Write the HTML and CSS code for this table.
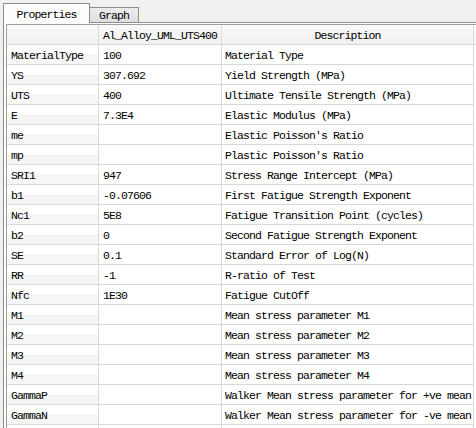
FILE: index.html
```html
<!DOCTYPE html>
<html>
<head>
<meta charset="utf-8">
<link rel="stylesheet" href="styles.css">
</head>
<body>
<div class="tabbar">
  <div class="tab active">Properties</div>
  <div class="tab">Graph</div>
</div>
<div class="panel">
  <div class="grid">
    <div class="hd"></div><div class="hd">Al_Alloy_UML_UTS400</div><div class="hd center">Description</div><div class="hd fill"></div>

    <div class="key">MaterialType</div><div class="c">100</div><div class="c d">Material Type</div><div class="fill"></div>
    <div class="key">YS</div><div class="c">307.692</div><div class="c d">Yield Strength (MPa)</div><div class="fill"></div>
    <div class="key">UTS</div><div class="c">400</div><div class="c d">Ultimate Tensile Strength (MPa)</div><div class="fill"></div>
    <div class="key">E</div><div class="c">7.3E4</div><div class="c d">Elastic Modulus (MPa)</div><div class="fill"></div>
    <div class="key">me</div><div class="c"></div><div class="c d">Elastic Poisson's Ratio</div><div class="fill"></div>
    <div class="key">mp</div><div class="c"></div><div class="c d">Plastic Poisson's Ratio</div><div class="fill"></div>
    <div class="key">SRI1</div><div class="c">947</div><div class="c d">Stress Range Intercept (MPa)</div><div class="fill"></div>
    <div class="key">b1</div><div class="c">-0.07606</div><div class="c d">First Fatigue Strength Exponent</div><div class="fill"></div>
    <div class="key">Nc1</div><div class="c">5E8</div><div class="c d">Fatigue Transition Point (cycles)</div><div class="fill"></div>
    <div class="key">b2</div><div class="c">0</div><div class="c d">Second Fatigue Strength Exponent</div><div class="fill"></div>
    <div class="key">SE</div><div class="c">0.1</div><div class="c d">Standard Error of Log(N)</div><div class="fill"></div>
    <div class="key">RR</div><div class="c">-1</div><div class="c d">R-ratio of Test</div><div class="fill"></div>
    <div class="key">Nfc</div><div class="c">1E30</div><div class="c d">Fatigue CutOff</div><div class="fill"></div>
    <div class="key">M1</div><div class="c"></div><div class="c d">Mean stress parameter M1</div><div class="fill"></div>
    <div class="key">M2</div><div class="c"></div><div class="c d">Mean stress parameter M2</div><div class="fill"></div>
    <div class="key">M3</div><div class="c"></div><div class="c d">Mean stress parameter M3</div><div class="fill"></div>
    <div class="key">M4</div><div class="c"></div><div class="c d">Mean stress parameter M4</div><div class="fill"></div>
    <div class="key">GammaP</div><div class="c"></div><div class="c d">Walker Mean stress parameter for +ve mean</div><div class="fill"></div>
    <div class="key">GammaN</div><div class="c"></div><div class="c d">Walker Mean stress parameter for -ve mean</div><div class="fill"></div>
    <div class="key"></div><div class="c"></div><div class="c d"></div><div class="fill"></div>
  </div>
</div>
</body>
</html>
```
FILE: styles.css
```css
html, body {
  margin: 0;
  padding: 0;
  background: #f0f0f0;
  overflow: hidden;
}
body {
  width: 476px;
  height: 428px;
  font-family: "Liberation Mono", "DejaVu Sans Mono", monospace;
  font-size: 11.5px;
  letter-spacing: -0.9px;
  color: #000;
}
.tabbar {
  display: flex;
  align-items: flex-end;
  height: 22px;
  padding-left: 3px;
}
.tab {
  box-sizing: border-box;
  text-align: center;
  white-space: nowrap;
}
.tab.active {
  position: relative;
  z-index: 1;
  width: 87px;
  height: 20px;
  margin-bottom: -1px;
  border: 1px solid #8c8c8c;
  border-bottom: none;
  background: #fcfcfc;
  padding-top: 3px;
  line-height: 16px;
}
.tab:not(.active) {
  width: 49px;
  height: 15px;
  border-top: 1px solid #8c8c8c;
  border-right: 1px solid #8c8c8c;
  background: linear-gradient(#ececec, #dedede);
  padding-top: 1px;
  line-height: 14px;
}
.panel {
  margin-left: 3px;
  border-left: 1px solid #8c8c8c;
  border-top: 1px solid #8c8c8c;
  padding: 1px 0 0 2px;
  background: #fcfcfc;
  height: 420px;
}
.grid {
  display: grid;
  grid-template-columns: 92px 123px 252px 1fr;
  grid-auto-rows: 20px;
  border-left: 1px solid #a0a0a0;
  border-top: 1px solid #a0a0a0;
  background: #fff;
}
.grid > div {
  box-sizing: border-box;
  border-right: 1px solid #d8d8d8;
  border-bottom: 1px solid #d8d8d8;
  padding: 3px 0 0 4px;
  line-height: 16px;
  white-space: nowrap;
  overflow: hidden;
}
.grid > .hd {
  background: linear-gradient(#fafafa, #f0f0f0);
  border-right-color: #dcdcdc;
  border-bottom-color: #d5d5d5;
}
.grid > .center {
  text-align: center;
  padding-left: 0;
}
.grid > .key {
  background: linear-gradient(#ffffff 0%, #ffffff 45%, #f4f4f4 55%, #f7f7f7 100%);
}
.grid > .d {
  padding-left: 3px;
}
.grid > .fill {
  border-right: none;
  border-bottom: none;
  padding: 0;
}
.grid > .hd.fill {
  border-bottom: 1px solid #d5d5d5;
}
```
